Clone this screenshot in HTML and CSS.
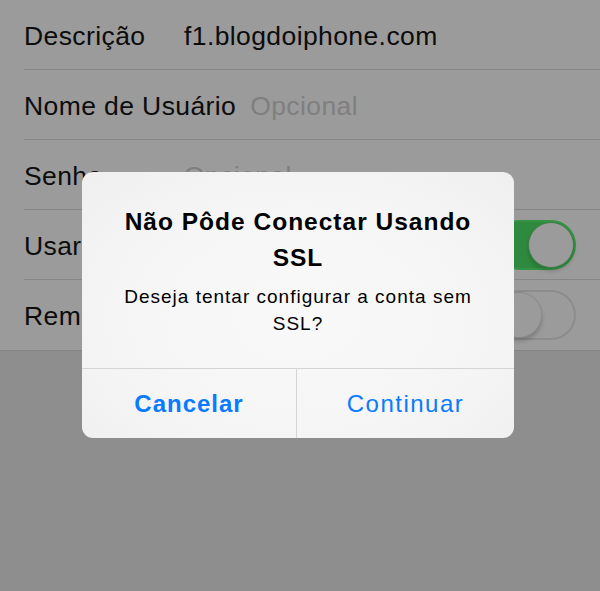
FILE: index.html
```html
<!DOCTYPE html>
<html lang="pt">
<head>
<meta charset="utf-8">
<title>Conta</title>
<link rel="stylesheet" href="styles.css">
</head>
<body>
<div class="screen">
  <div class="list">
    <div class="row">
      <div class="row-inner">
        <span class="label">Descrição</span>
        <span class="value">f1.blogdoiphone.com</span>
      </div>
    </div>
    <div class="row">
      <div class="row-inner">
        <span class="label">Nome de Usuário</span>
        <span class="value placeholder">Opcional</span>
      </div>
    </div>
    <div class="row">
      <div class="row-inner">
        <span class="label">Senha</span>
        <span class="value placeholder">Opcional</span>
      </div>
    </div>
    <div class="row">
      <div class="row-inner">
        <span class="label">Usar SSL</span>
        <span class="switch on"><span class="knob"></span></span>
      </div>
    </div>
    <div class="row last">
      <div class="row-inner">
        <span class="label">Remover</span>
        <span class="switch off"><span class="knob"></span></span>
      </div>
    </div>
  </div>

  <div class="alert">
    <div class="alert-body">
      <div class="alert-title">Não Pôde Conectar Usando SSL</div>
      <div class="alert-message">Deseja tentar configurar a conta sem SSL?</div>
    </div>
    <div class="alert-buttons">
      <div class="alert-btn primary">Cancelar</div>
      <div class="alert-btn secondary">Continuar</div>
    </div>
  </div>
</div>
</body>
</html>
```

FILE: styles.css
```css
html, body {
  margin: 0;
  padding: 0;
}

body {
  width: 600px;
  height: 591px;
  background: #8e8e8e;
  font-family: "Liberation Sans", Arial, sans-serif;
  overflow: hidden;
}

.screen {
  position: relative;
  width: 600px;
  height: 591px;
}

.list {
  background: #9b9b9b;
  border-bottom: 1px solid #848484;
}

.row {
  padding-left: 24px;
}

.row-inner {
  display: flex;
  align-items: center;
  padding-top: 2px;
  box-sizing: border-box;
  border-bottom: 1px solid #868686;
  height: 70px;
}

.row.last .row-inner {
  border-bottom: none;
}

.label {
  font-size: 26.5px;
  letter-spacing: 0.4px;
  line-height: 26px;
  color: #0c0c0c;
  min-width: 146px;
  margin-right: 14px;
  white-space: nowrap;
}

.value {
  font-size: 26.5px;
  letter-spacing: 0.4px;
  line-height: 26px;
  color: #0c0c0c;
  white-space: nowrap;
}

.placeholder {
  color: #7f7f7f;
}

.switch {
  margin-left: auto;
  margin-right: 24px;
  width: 82px;
  height: 50px;
  border-radius: 25px;
  box-sizing: border-box;
  position: relative;
  display: block;
  margin-top: -2px;
}

.switch.on {
  background: #2f8a3f;
  border: 2px solid #359444;
}

.switch.off {
  background: #9b9b9b;
  border: 2px solid #8c8c8c;
}

.knob {
  position: absolute;
  top: 0;
  width: 46px;
  height: 46px;
  border-radius: 50%;
  background: #9b9b9b;
  box-sizing: border-box;
}

.switch.on .knob {
  right: 0;
  border: 1px solid #3f7f46;
  box-shadow: 0 3px 4px rgba(0, 0, 0, 0.18);
}

.switch.off .knob {
  left: 0;
  border: 1px solid #8a8a8a;
  box-shadow: 0 3px 4px rgba(0, 0, 0, 0.2);
}

.alert {
  position: absolute;
  left: 82px;
  top: 172px;
  width: 432px;
  border-radius: 11px;
  overflow: hidden;
  background: radial-gradient(ellipse at 50% 55%, #f9f9f9 0%, #f5f5f5 60%, #efefef 100%);
}

.alert-body {
  padding: 32px 30px 31px;
  text-align: center;
  border-bottom: 1px solid #d5d5d5;
}

.alert-title {
  font-size: 24.5px;
  font-weight: bold;
  letter-spacing: 1px;
  line-height: 36px;
  color: #000;
}

.alert-message {
  margin-top: 7px;
  font-size: 19px;
  letter-spacing: 1px;
  line-height: 27px;
  color: #000;
}

.alert-buttons {
  display: grid;
  grid-template-columns: 215px 1fr;
  height: 69px;
}

.alert-btn {
  display: flex;
  align-items: center;
  justify-content: center;
  font-size: 24px;
  line-height: 28px;
  color: #0a7aff;
}

.alert-btn.primary {
  font-weight: bold;
  letter-spacing: 1px;
  border-right: 1px solid #d5d5d5;
}

.alert-btn.secondary {
  letter-spacing: 1.5px;
}
```
